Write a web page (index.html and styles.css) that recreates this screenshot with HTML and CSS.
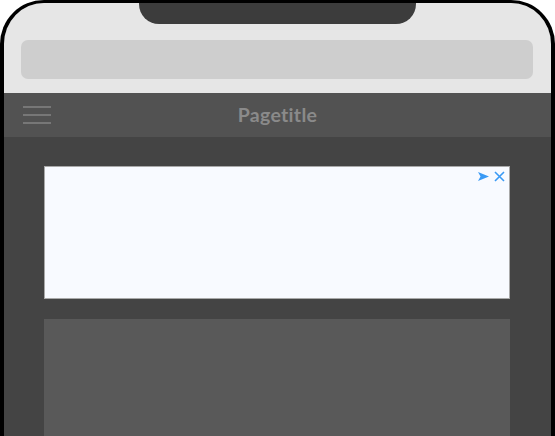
FILE: index.html
```html
<!DOCTYPE html>
<html>
<head>
<meta charset="utf-8">
<link rel="stylesheet" href="styles.css">
</head>
<body>
<div class="phone">
  <div class="notch"></div>
  <div class="browser">
    <div class="address"></div>
  </div>
  <div class="nav">
    <div class="burger"><span></span><span></span><span></span></div>
    <div class="title">Pagetitle</div>
  </div>
  <div class="content">
    <div class="ad">
      <div class="ad-icons">
        <svg width="11" height="9" viewBox="0 0 11 9"><path d="M0 0 L11 4.5 L0 9 L2.5 4.5 Z" fill="#3a9af5"/></svg>
        <svg width="11" height="11" viewBox="0 0 11 11"><path d="M1 1 L10 10 M10 1 L1 10" stroke="#3a9af5" stroke-width="1.6" fill="none"/></svg>
      </div>
    </div>
    <div class="card"></div>
  </div>
</div>
</body>
</html>
```
FILE: styles.css
```css
html, body {
  margin: 0;
  padding: 0;
  background: #ffffff;
  overflow: hidden;
}
.phone {
  position: relative;
  width: 547px;
  height: 433px;
  border: 4px solid #000;
  border-bottom: none;
  border-top-width: 3px;
  border-radius: 44px 44px 0 0;
  overflow: hidden;
  display: flex;
  flex-direction: column;
  background: #444444;
}
.notch {
  position: absolute;
  left: 135px;
  top: -3px;
  width: 277px;
  height: 24px;
  background: #3c3c3c;
  border-radius: 0 0 20px 20px;
}
.browser {
  background: #e6e6e6;
  padding: 37px 18px 14px 17px;
}
.address {
  height: 39px;
  background: #cecece;
  border-radius: 7px;
}
.nav {
  position: relative;
  height: 44px;
  background: #525252;
  display: flex;
  align-items: center;
  justify-content: center;
}
.burger {
  position: absolute;
  left: 19px;
  top: 13px;
  display: flex;
  flex-direction: column;
  gap: 6px;
}
.burger span {
  display: block;
  width: 28px;
  height: 2px;
  background: #777777;
}
.title {
  font-family: Lato, "Open Sans", sans-serif;
  font-weight: 700;
  font-size: 19.5px;
  letter-spacing: 0.3px;
  font-variant-ligatures: none;
  font-feature-settings: "liga" 0, "dlig" 0;
  color: #8a8a8a;
  margin-top: -2px;
}
.content {
  flex: 1;
  padding: 29px 41px 0 40px;
  display: flex;
  flex-direction: column;
  gap: 20px;
}
.ad {
  position: relative;
  height: 131px;
  flex: none;
  background: #f8faff;
  border: 1px solid #a9a9a9;
}
.ad-icons {
  position: absolute;
  top: 4px;
  right: 4px;
  display: flex;
  align-items: center;
  gap: 5px;
}
.ad-icons svg { display: block; }
.card {
  flex: 1;
  background: #595959;
}
```
